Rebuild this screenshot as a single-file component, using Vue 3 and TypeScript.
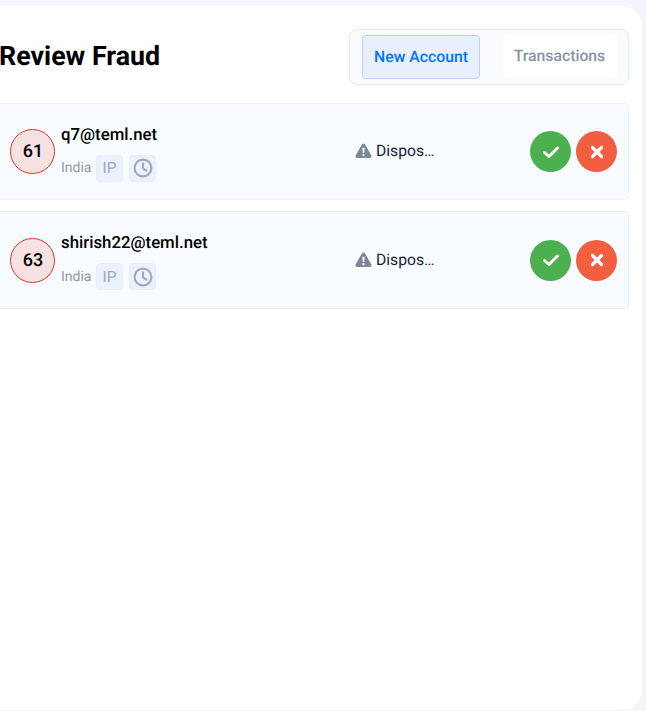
<script setup lang="ts">
interface Row { score: number; email: string; country: string }
const rows: Row[] = [
  { score: 61, email: 'q7@teml.net', country: 'India' },
  { score: 63, email: 'shirish22@teml.net', country: 'India' },
]
</script>

<template>
  <div class="page">
    <main class="card">
      <header class="head">
        <h1 class="title">Review Fraud</h1>
        <div class="tabs">
          <button class="tab active">New Account</button>
          <button class="tab">Transactions</button>
        </div>
      </header>
      <section class="list">
        <article v-for="r in rows" :key="r.email" class="row">
          <div class="score">{{ r.score }}</div>
          <div class="info">
            <div class="email">{{ r.email }}</div>
            <div class="meta">
              <span class="country">{{ r.country }}</span>
              <span class="chip ip">IP</span>
              <span class="chip">
                <svg width="20" height="20" viewBox="0 0 20 20" fill="none" stroke="#a3a9b8" stroke-width="2.1">
                  <circle cx="10" cy="10" r="8.4" />
                  <path d="M10 5.2V10.4L13.4 12.6" stroke-linecap="round" stroke-linejoin="round" />
                </svg>
              </span>
            </div>
          </div>
          <div class="reason">
            <svg width="17" height="16" viewBox="0 0 17 16">
              <path fill="#7f8699" fill-rule="evenodd" d="M8.5.5c.7 0 1.300.4 1.600.9l6.200 11c.7 1.200-.2 2.600-1.600 2.600H2.300c-1.400 0-2.300-1.400-1.600-2.600l6.200-11c.3-.5.900-.9 1.600-.9ZM7.400 4.800l.3 5.200h1.600l.3-5.200h-2.200ZM8.500 11a1.150 1.150 0 1 0 0 2.300 1.150 1.150 0 0 0 0-2.300Z" />
            </svg>
            <span class="reason-text">Dispos…</span>
          </div>
          <div class="actions">
            <button class="round ok" aria-label="Approve">
              <svg width="18" height="14" viewBox="0 0 18 14" fill="none" stroke="#fff" stroke-width="3" stroke-linecap="round" stroke-linejoin="round">
                <path d="M2.500 7.500L7 11.500L15.500 3" />
              </svg>
            </button>
            <button class="round no" aria-label="Reject">
              <svg width="14" height="14" viewBox="0 0 14 14" fill="none" stroke="#fff" stroke-width="3.200" stroke-linecap="round">
                <path d="M2.500 2.500L11.500 11.500M11.500 2.500L2.500 11.500" />
              </svg>
            </button>
          </div>
        </article>
      </section>
    </main>
  </div>
</template>

<style>
html, body { margin: 0; background: #f4f5fa; overflow: hidden; }
</style>

<style scoped>
.page {
  width: 646px;
  height: 711px;
  padding: 6px 4px 1px 0;
  box-sizing: border-box;
  overflow: hidden;
  font-family: Roboto, "Liberation Sans", sans-serif;
  text-rendering: geometricPrecision;
}
.card {
  margin-left: -30px;
  height: 704px;
  background: #fff;
  border-radius: 20px;
  padding: 23px 13px 0 30px;
  box-sizing: border-box;
}
.head {
  display: flex;
  align-items: center;
  justify-content: space-between;
  height: 56px;
}
.title {
  margin: 0 0 2px -1px;
  font-size: 26.8px;
  line-height: 32px;
  font-weight: 700;
  color: #000;
}
.tabs {
  width: 280px;
  height: 56px;
  box-sizing: border-box;
  display: flex;
  padding: 5px 11px 5px 12px;
  gap: 22px;
  background: #fafbfe;
  border: 1px solid #e7ebf5;
  border-radius: 8px;
}
.tab {
  height: 42px;
  width: 115px;
  border: 0;
  border-radius: 4px;
  background: #fff;
  color: #8a91a6;
  font: 500 15.75px/40px Roboto, sans-serif;
  text-rendering: geometricPrecision;
  padding: 0 0 1px;
}
.tab.active {
  width: 118px;
  height: 44px;
  background: #e8effe;
  border: 1px solid #bdd2f9;
  color: #0075ff;
}
.list {
  margin-top: 18px;
  display: flex;
  flex-direction: column;
  gap: 11px;
  margin-left: -20px;
}
.row {
  height: 97.4px;
  box-sizing: border-box;
  display: flex;
  align-items: center;
  background: #f8fbff;
  border: 1px solid #eef1f7;
  border-radius: 4px;
  padding-left: 29px;
  padding-right: 11px;
}
.score {
  width: 45px;
  height: 45px;
  box-sizing: border-box;
  flex: none;
  border: 1px solid #e0381c;
  border-radius: 50%;
  background: #f6e2e2;
  display: flex;
  align-items: center;
  justify-content: center;
  padding-left: 1px;
  font-size: 18px;
  font-weight: 500;
  color: #000;
}
.info {
  margin-left: 6px;
  width: 294px;
  flex: none;
  display: flex;
  flex-direction: column;
  gap: 9px;
  margin-top: 2px;
}
.email {
  font-size: 16.8px;
  line-height: 22px;
  font-weight: 500;
  color: #000;
}
.meta {
  display: flex;
  align-items: center;
  gap: 6px;
}
.country {
  font-size: 14px;
  color: #9398ac;
  margin-right: -1px;
}
.chip {
  width: 27px;
  height: 27px;
  box-sizing: border-box;
  display: flex;
  align-items: center;
  justify-content: center;
  background: #ebf2fe;
  border: 1px solid #e6edfb;
  border-radius: 4px;
}
.ip {
  padding-right: 1px;
  font-size: 15.5px;
  color: #a3a9b8;
}
.reason {
  display: flex;
  align-items: center;
  gap: 4px;
  flex: 1;
  margin-top: -1px;
}
.reason-text {
  margin-top: -1px;
  font-size: 15.7px;
  color: #1c2433;
}
.actions {
  display: flex;
  gap: 5px;
}
.round {
  width: 41px;
  height: 41px;
  border: 0;
  border-radius: 50%;
  padding: 0;
  display: flex;
  align-items: center;
  justify-content: center;
}
.ok { background: #4caf50; }
.no { background: #f25f40; }
</style>
